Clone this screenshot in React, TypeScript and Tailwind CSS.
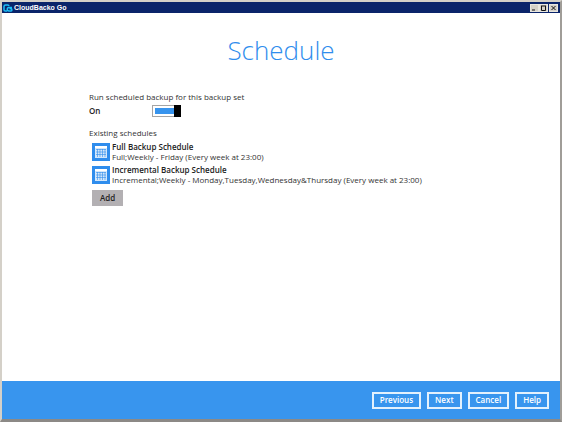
import { useState } from "react";

const schedules = [
    {
        id: 1,
        name: "Full Backup Schedule",
        detail: "Full;Weekly - Friday (Every week at 23:00)",
    },
    {
        id: 2,
        name: "Incremental Backup Schedule",
        detail: "Incremental;Weekly - Monday,Tuesday,Wednesday&Thursday (Every week at 23:00)",
    },
];

const footerButtons = ["Previous", "Next", "Cancel", "Help"];

function CloudLogo() {
    return (
        <svg viewBox="0 0 20 16" className="h-2 w-2.5" fill="none" stroke="#1cc0f8" strokeWidth="3" aria-hidden="true">
            <path d="M8 14H4.500A2.500 2.500 0 0 1 2 11.500V5a3 3 0 0 1 3-3h4.500a2.500 2.500 0 0 1 2.500 2" />
            <path d="M18 7h-6a3.500 3.500 0 0 0 0 7h4a2.300 2.300 0 0 0 0-4.500h-3" />
        </svg>
    );
}

function CalendarIcon() {
    return (
        <svg viewBox="0 0 18 18" className="size-[18px] shrink-0" aria-hidden="true">
            <rect width="18" height="18" fill="#2f8ded" />
            <rect x="3" y="3" width="12" height="12" fill="#d3e7fb" />
            <rect x="3" y="3" width="12" height="2" fill="#fff" />
            <path d="M4 6.500h10M4 9h10M4 11.500h10M5.500 6v8M8 6v8M10.500 6v8M13 6v8" stroke="#2f8ded" strokeWidth="0.6" />
        </svg>
    );
}

function TitleBar() {
    const control = "flex h-2 w-[9px] items-center justify-center border border-[#e8e6df] bg-[#d4d0c8]";
    return (
        <header className="flex h-[11px] items-center bg-[#0a246a] pl-px pr-0.5">
            <CloudLogo />
            <h1 className="ml-px flex-1 font-['Liberation_Sans',sans-serif] text-[7px] leading-none font-bold text-white">
                CloudBacko Go
            </h1>
            <div className="flex">
                <button type="button" aria-label="Minimize" className={control}>
                    <svg viewBox="0 0 7 6" className="h-1.5 w-[7px]">
                        <path d="M1 5h3" stroke="#111" />
                    </svg>
                </button>
                <button type="button" aria-label="Maximize" className={control}>
                    <svg viewBox="0 0 7 6" className="h-1.5 w-[7px]" fill="none" stroke="#111">
                        <path d="M1.500 1v4.500h4V1M1 1h5" />
                    </svg>
                </button>
                <button type="button" aria-label="Close" className={`${control} ml-px`}>
                    <svg viewBox="0 0 7 6" className="h-1.5 w-[7px]" stroke="#111">
                        <path d="M1.500 1l4 4M5.500 1l-4 4" />
                    </svg>
                </button>
            </div>
        </header>
    );
}

export default function App() {
    const [enabled, setEnabled] = useState(true);

    return (
        <div className="flex min-h-screen flex-col border-2 border-b-[3px] border-[#d4d0c8] border-r-[#a09d98] border-b-[#8c8986] bg-white font-['Open_Sans',sans-serif] text-[8px] leading-[10px] text-[#333]">
            <TitleBar />

            <main className="flex-1">
                <h2 className="pt-[19px] text-center text-[26px] leading-9 font-light text-[#2f8ded]">Schedule</h2>

                <div className="px-[87px] pt-6">
                    <p>Run scheduled backup for this backup set</p>
                    <div className="mt-0.5 flex h-3.5 items-center">
                        <label htmlFor="schedule-switch" className="w-[63px] font-semibold text-[#222]">
                            {enabled ? "On" : "Off"}
                        </label>
                        <button
                            id="schedule-switch"
                            type="button"
                            role="switch"
                            aria-checked={enabled}
                            onClick={() => setEnabled(!enabled)}
                            className={`flex h-3 w-[29px] ${enabled ? "" : "flex-row-reverse"}`}
                        >
                            <span className="h-full flex-1 border border-r-0 border-[#a5a5a5] bg-white py-0.5 pl-0.5">
                                <span className={`block h-full ${enabled ? "bg-[#3794ee]" : "bg-[#a5a5a5]"}`} />
                            </span>
                            <span className="h-full w-[7px] bg-black" />
                        </button>
                    </div>

                    <h3 className="mt-2.5">Existing schedules</h3>
                    <ul className="mt-1 ml-[3px] space-y-[3px]">
                        {schedules.map((schedule) => (
                            <li key={schedule.id} className="flex items-center gap-0.5">
                                <CalendarIcon />
                                <div>
                                    <div className="font-semibold text-[#222]">{schedule.name}</div>
                                    <div>{schedule.detail}</div>
                                </div>
                            </li>
                        ))}
                    </ul>
                    <button type="button" className="mt-[5px] ml-[3px] h-4 w-[31px] bg-[#b3b0b3] font-semibold text-[#222]">
                        Add
                    </button>
                </div>
            </main>

            <footer className="flex h-[38px] items-center justify-end gap-1.5 bg-[#3895ee] pr-[11px]">
                {footerButtons.map((label) => (
                    <button
                        key={label}
                        type="button"
                        className="h-[17px] border-2 border-[#e3f1fd] px-1.5 font-semibold text-white"
                    >
                        {label}
                    </button>
                ))}
            </footer>
        </div>
    );
}
